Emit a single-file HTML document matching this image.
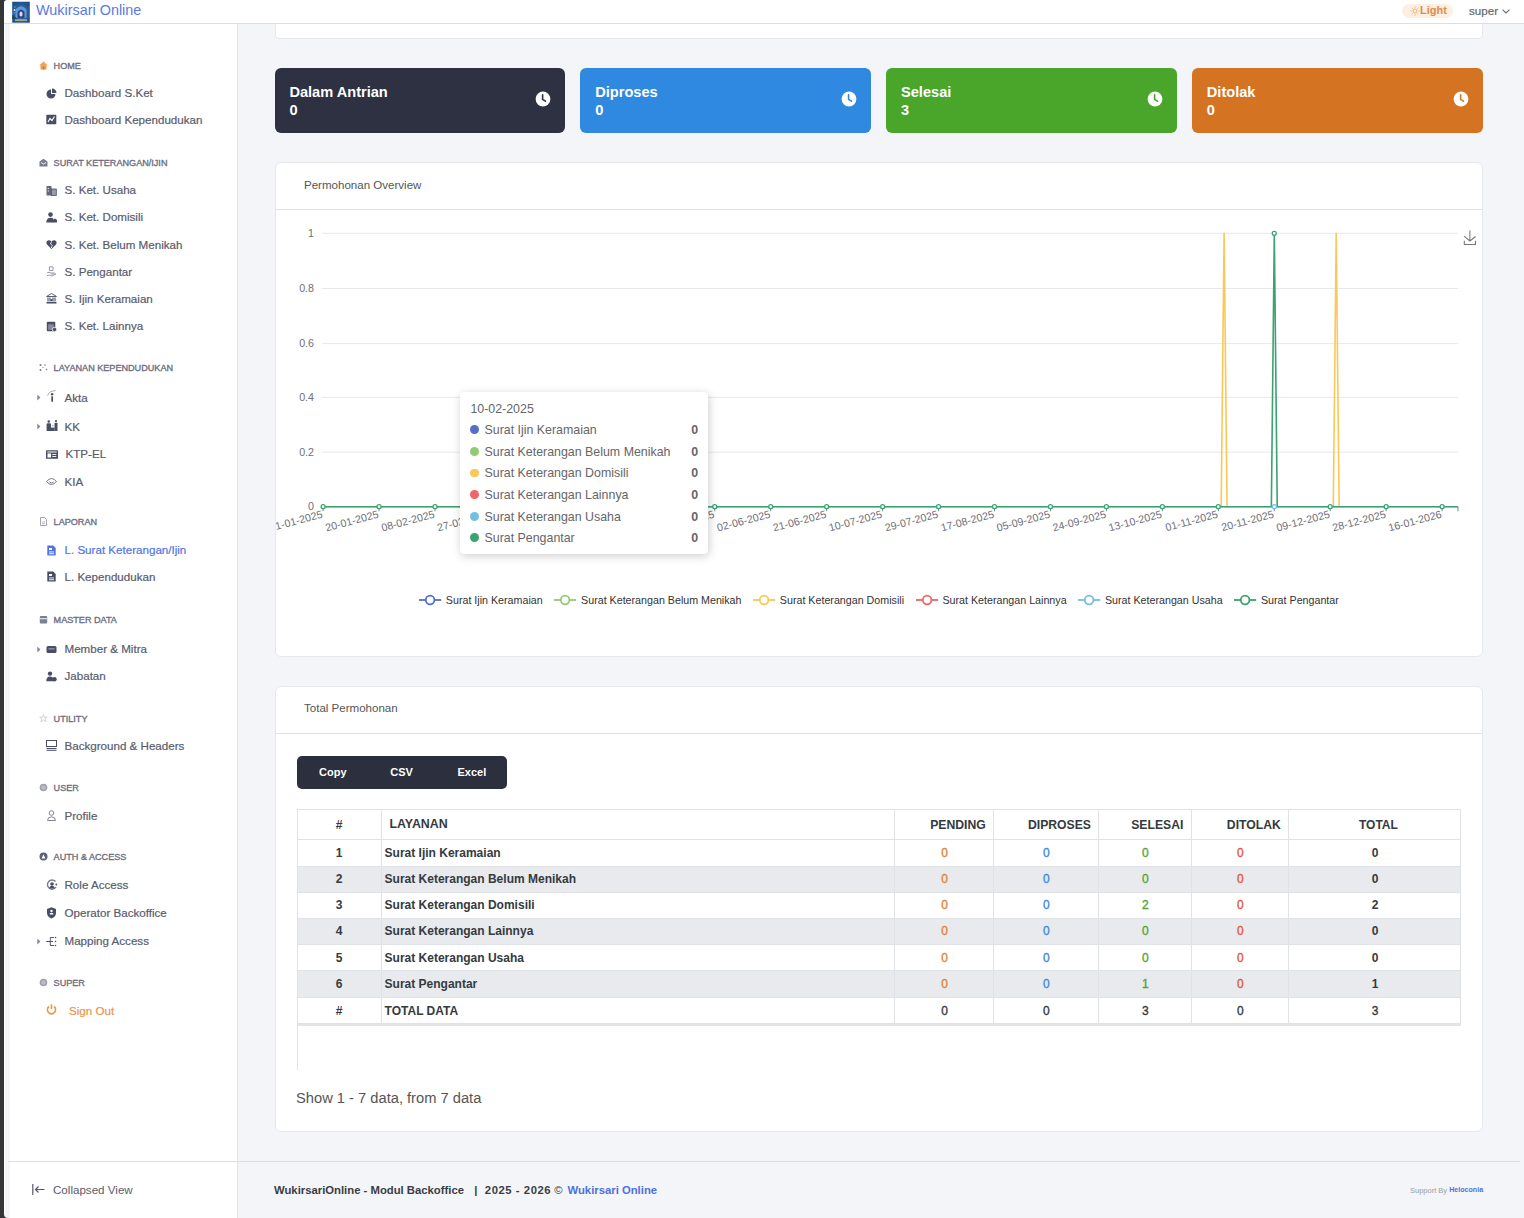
<!DOCTYPE html><html><head><meta charset="utf-8"><title>Wukirsari Online</title><style>
*{box-sizing:border-box;margin:0;padding:0}
html,body{width:1524px;height:1218px;overflow:hidden;background:#f4f5f9;font-family:"Liberation Sans",sans-serif}
body{position:relative}
.t{position:absolute;white-space:nowrap}
.b{position:absolute}
svg{position:absolute;overflow:visible}
</style></head><body>
<div class="b" style="left:0;top:0;width:1524px;height:1218px;background:#f4f5f9"></div>
<div class="b" style="left:4px;top:0;width:234px;height:1218px;background:#fff;border-right:1px solid #e2e4e9"></div>
<div class="b" style="left:5px;top:24px;width:5px;height:1194px;background:#f4f5f8"></div>
<div class="b" style="left:8px;top:1161px;width:230px;height:1px;background:#dcdee3"></div>
<div class="b" style="left:238px;top:1161px;width:1282px;height:1px;background:#dcdee3"></div>
<div class="b" style="left:274.6px;top:-20px;width:1208.4px;height:58.7px;background:#fff;border:1px solid #e6e8ed;border-radius:4px"></div>
<div class="b" style="left:4px;top:0;width:1520px;height:24px;background:#fff;border-bottom:1px solid #dcdee3"></div>
<div class="b" style="left:0;top:0;width:4px;height:1218px;background:#353538"></div>
<svg style="left:4px;top:0" width="3" height="3"><path d="M0 0 H3 A3 3 0 0 0 0 3 Z" fill="#353538"/></svg>
<svg style="left:4px;top:1214px" width="4" height="4"><path d="M0 4 H4 A4 4 0 0 1 0 0 Z" fill="#353538"/></svg>
<svg style="left:11.5px;top:0.5px" width="18" height="22" viewBox="0 0 18 22"><defs><radialGradient id="lg1" cx="0.5" cy="0.55" r="0.6"><stop offset="0" stop-color="#3f78c0"/><stop offset="1" stop-color="#1e4f86"/></radialGradient></defs><rect x="0" y="0" width="18" height="22" fill="#b9d3e8"/><rect x="0.3" y="1" width="17.4" height="20.6" fill="url(#lg1)"/><path d="M3.5 17 L3.5 9 Q9 1.5 14.5 9 L14.5 17 Z" fill="#5b9ad6"/><path d="M5.5 17 L5.5 11 Q9 6 12.5 11 L12.5 17 Z" fill="#2a4585"/><ellipse cx="9" cy="13" rx="1.6" ry="2.6" fill="#f0cfe8"/><path d="M0.3 14 Q3 15 5 18 L0.3 18 Z" fill="#1f4a45"/><rect x="3" y="18.2" width="12" height="1.8" fill="#a9a780"/><circle cx="2.5" cy="9" r="0.9" fill="#cfefff"/><circle cx="3" cy="6" r="0.6" fill="#9fc8e0"/><circle cx="2.2" cy="11.8" r="0.6" fill="#9fc8e0"/></svg>
<div class="t" style="left:36.00px;top:2.61px;font-size:14.4px;line-height:14.4px;color:#5a7ae2;font-weight:normal;">Wukirsari Online</div>
<div class="b" style="left:1402px;top:4px;width:51px;height:14px;border-radius:7px;background:#fdf0e2"></div>
<svg style="left:1409.5px;top:6px" width="10" height="10" viewBox="0 0 10 10"><circle cx="5" cy="5" r="2" fill="none" stroke="#f0a868" stroke-width="0.9"/><g stroke="#f0a868" stroke-width="0.8"><path d="M5 0.3V1.8M5 8.2V9.7M0.3 5H1.8M8.2 5H9.7M1.7 1.7L2.7 2.7M7.3 7.3L8.3 8.3M1.7 8.3L2.7 7.3M7.3 2.7L8.3 1.7"/></g></svg>
<div class="t" style="left:1420.00px;top:5.49px;font-size:11px;line-height:11px;color:#e38b42;font-weight:bold;">Light</div>
<div class="t" style="left:1469.00px;top:4.98px;font-size:11.6px;line-height:11.6px;color:#67686c;font-weight:normal;-webkit-text-stroke:0.2px #67686c">super</div>
<svg style="left:1502px;top:9px" width="8" height="5" viewBox="0 0 8 5"><path d="M0.5 0.6 L4 4 L7.5 0.6" fill="none" stroke="#6b6d72" stroke-width="1.1"/></svg>
<div class="t" style="left:53.60px;top:61.50px;font-size:9.1px;line-height:9.1px;color:#6d6f82;font-weight:normal;-webkit-text-stroke:0.35px #6d6f82">HOME</div>
<svg style="left:39px;top:60.5px" width="9" height="9" viewBox="0 0 9 9"><path d="M4.5 0.5 L8.7 4.3 L7.6 4.3 L7.6 8.5 L1.4 8.5 L1.4 4.3 L0.3 4.3 Z" fill="#f0a35a"/><rect x="3.6" y="5.6" width="1.8" height="2.9" fill="#c8742e"/></svg>
<div class="t" style="left:53.60px;top:158.80px;font-size:9.1px;line-height:9.1px;color:#6d6f82;font-weight:normal;-webkit-text-stroke:0.35px #6d6f82">SURAT KETERANGAN/IJIN</div>
<svg style="left:39px;top:157.8px" width="9" height="9" viewBox="0 0 9 9"><path d="M0.5 3.5 L4.5 0.8 L8.5 3.5 L8.5 8.5 L0.5 8.5 Z" fill="#7a7c90"/><path d="M2 4.5 L4.5 6 L7 4.5" stroke="#fff" stroke-width="0.9" fill="none"/></svg>
<div class="t" style="left:53.60px;top:364.10px;font-size:9.1px;line-height:9.1px;color:#6d6f82;font-weight:normal;-webkit-text-stroke:0.35px #6d6f82">LAYANAN KEPENDUDUKAN</div>
<svg style="left:39px;top:363.1px" width="9" height="9" viewBox="0 0 9 9"><circle cx="1.5" cy="2" r="1" fill="#7a7c90"/><circle cx="6" cy="2" r="0.8" fill="#7a7c90"/><circle cx="1.5" cy="7" r="1" fill="#7a7c90"/><circle cx="7.5" cy="6.5" r="0.8" fill="#7a7c90"/><circle cx="4" cy="4.5" r="0.6" fill="#7a7c90"/></svg>
<div class="t" style="left:53.60px;top:518.40px;font-size:9.1px;line-height:9.1px;color:#6d6f82;font-weight:normal;-webkit-text-stroke:0.35px #6d6f82">LAPORAN</div>
<svg style="left:39px;top:517.4px" width="9" height="9" viewBox="0 0 9 9"><path d="M1.5 0.5 H5.5 L7.5 2.5 V8.5 H1.5 Z" fill="none" stroke="#9a9cab" stroke-width="0.9"/><path d="M3 5 H6 M3 6.7 H6" stroke="#9a9cab" stroke-width="0.7"/></svg>
<div class="t" style="left:53.60px;top:615.70px;font-size:9.1px;line-height:9.1px;color:#6d6f82;font-weight:normal;-webkit-text-stroke:0.35px #6d6f82">MASTER DATA</div>
<svg style="left:39px;top:614.7px" width="9" height="9" viewBox="0 0 9 9"><rect x="0.8" y="1" width="7.4" height="7.5" rx="1" fill="#7d7f93"/><rect x="0.8" y="3.3" width="7.4" height="0.9" fill="#fff"/></svg>
<div class="t" style="left:53.60px;top:714.80px;font-size:9.1px;line-height:9.1px;color:#6d6f82;font-weight:normal;-webkit-text-stroke:0.35px #6d6f82">UTILITY</div>
<svg style="left:39px;top:713.8px" width="9" height="9" viewBox="0 0 9 9"><path d="M4.5 0.5 L5.4 3.2 L8.3 3 L6 4.8 L7.2 7.8 L4.5 6 L1.8 7.8 L3 4.8 L0.7 3 L3.6 3.2 Z" fill="none" stroke="#c8cad3" stroke-width="0.8"/></svg>
<div class="t" style="left:53.60px;top:784.10px;font-size:9.1px;line-height:9.1px;color:#6d6f82;font-weight:normal;-webkit-text-stroke:0.35px #6d6f82">USER</div>
<svg style="left:39px;top:783.1px" width="9" height="9" viewBox="0 0 9 9"><circle cx="4.5" cy="4.5" r="3.8" fill="#9ea0ae"/><circle cx="4.5" cy="4.5" r="2.2" fill="#b9bbc6"/></svg>
<div class="t" style="left:53.60px;top:853.00px;font-size:9.1px;line-height:9.1px;color:#6d6f82;font-weight:normal;-webkit-text-stroke:0.35px #6d6f82">AUTH &amp; ACCESS</div>
<svg style="left:39px;top:852.0px" width="9" height="9" viewBox="0 0 9 9"><circle cx="4.5" cy="4.5" r="4" fill="#5d6076"/><path d="M2.6 6.5 L4.5 2.2 L6.4 6.5 Z" fill="#fff"/></svg>
<div class="t" style="left:53.60px;top:978.90px;font-size:9.1px;line-height:9.1px;color:#6d6f82;font-weight:normal;-webkit-text-stroke:0.35px #6d6f82">SUPER</div>
<svg style="left:39px;top:977.9px" width="9" height="9" viewBox="0 0 9 9"><circle cx="4.5" cy="4.5" r="3.8" fill="#9ea0ae"/><circle cx="4.5" cy="4.5" r="2.2" fill="#b9bbc6"/></svg>
<div class="t" style="left:64.50px;top:87.18px;font-size:11.6px;line-height:11.6px;color:#595b6d;font-weight:normal;-webkit-text-stroke:0.2px #595b6d">Dashboard S.Ket</div>
<svg style="left:46px;top:87.5px" width="11" height="11" viewBox="0 0 11 11"><path d="M5 1.5 A4.5 4.5 0 1 0 9.5 6 L5 6 Z" fill="#4a4d66"/><path d="M6 0.5 A4.5 4.5 0 0 1 10.5 5 L6 5 Z" fill="#4a4d66"/></svg>
<div class="t" style="left:64.50px;top:113.78px;font-size:11.6px;line-height:11.6px;color:#595b6d;font-weight:normal;-webkit-text-stroke:0.2px #595b6d">Dashboard Kependudukan</div>
<svg style="left:46px;top:114.1px" width="11" height="11" viewBox="0 0 11 11"><rect x="0.3" y="0.8" width="10" height="9.4" rx="0.8" fill="#4a4d66"/><path d="M2 8 L4 4.5 L6 6.5 L8.5 2.5" stroke="#fff" stroke-width="1.1" fill="none"/></svg>
<div class="t" style="left:64.50px;top:184.38px;font-size:11.6px;line-height:11.6px;color:#595b6d;font-weight:normal;-webkit-text-stroke:0.2px #595b6d">S. Ket. Usaha</div>
<svg style="left:46px;top:184.7px" width="11" height="11" viewBox="0 0 11 11"><rect x="0.5" y="1" width="5" height="9.5" fill="#4a4d66" opacity="0.85"/><rect x="5.5" y="4" width="4.8" height="6.5" fill="#9a9cab" stroke="#4a4d66" stroke-width="0.8"/><rect x="1.8" y="3" width="1" height="1" fill="#fff"/><rect x="1.8" y="5.5" width="1" height="1" fill="#fff"/></svg>
<div class="t" style="left:64.50px;top:211.48px;font-size:11.6px;line-height:11.6px;color:#595b6d;font-weight:normal;-webkit-text-stroke:0.2px #595b6d">S. Ket. Domisili</div>
<svg style="left:46px;top:211.8px" width="11" height="11" viewBox="0 0 11 11"><circle cx="4.5" cy="2.6" r="2.3" fill="#4a4d66"/><path d="M0.2 10.5 Q0.5 5.8 4.5 5.8 Q7 5.8 7.5 7 L7.5 10.5 Z" fill="#4a4d66"/><path d="M7 10.5 L7 8 L9 6.5 L11 8 L11 10.5 Z" fill="#4a4d66"/></svg>
<div class="t" style="left:64.50px;top:238.58px;font-size:11.6px;line-height:11.6px;color:#595b6d;font-weight:normal;-webkit-text-stroke:0.2px #595b6d">S. Ket. Belum Menikah</div>
<svg style="left:46px;top:238.9px" width="11" height="11" viewBox="0 0 11 11"><path d="M5.5 10 L1 5.5 Q-0.5 3.5 1 2 Q3 0.3 5.5 2.5 Q8 0.3 10 2 Q11.5 3.5 10 5.5 Z" fill="#4a4d66"/><path d="M5.5 2.5 L4.5 5 L6.3 6.3 L5.3 9" stroke="#fff" stroke-width="0.8" fill="none"/></svg>
<div class="t" style="left:64.50px;top:265.68px;font-size:11.6px;line-height:11.6px;color:#595b6d;font-weight:normal;-webkit-text-stroke:0.2px #595b6d">S. Pengantar</div>
<svg style="left:46px;top:266.0px" width="11" height="11" viewBox="0 0 11 11"><path d="M3.5 0.8 H7 V4.5 H3.5 Z M1 7 Q3 5.5 5 7 L8.5 7 Q9.5 7.5 8.5 8 L5 8 M1 9.5 Q4 8.5 6 10 L10 8" fill="none" stroke="#8f91a2" stroke-width="0.9"/></svg>
<div class="t" style="left:64.50px;top:292.78px;font-size:11.6px;line-height:11.6px;color:#595b6d;font-weight:normal;-webkit-text-stroke:0.2px #595b6d">S. Ijin Keramaian</div>
<svg style="left:46px;top:293.1px" width="11" height="11" viewBox="0 0 11 11"><path d="M0.5 3.5 L5.5 0.5 L10.5 3.5 Z" fill="none" stroke="#4a4d66" stroke-width="0.9"/><path d="M2 4.5 V8.5 M4 4.5 V8.5 M7 4.5 V8.5 M9 4.5 V8.5" stroke="#4a4d66" stroke-width="1.1"/><rect x="0.5" y="9" width="10" height="1.5" fill="#4a4d66"/><circle cx="5.5" cy="7.2" r="1.1" fill="#4a4d66"/></svg>
<div class="t" style="left:64.50px;top:320.28px;font-size:11.6px;line-height:11.6px;color:#595b6d;font-weight:normal;-webkit-text-stroke:0.2px #595b6d">S. Ket. Lainnya</div>
<svg style="left:46px;top:320.6px" width="11" height="11" viewBox="0 0 11 11"><rect x="0.8" y="0.8" width="8.5" height="9.5" rx="1" fill="#4a4d66"/><rect x="2.2" y="3.3" width="5.5" height="5.5" fill="#fff" opacity="0.35"/><circle cx="8.5" cy="8.5" r="2.2" fill="#4a4d66" stroke="#fff" stroke-width="0.8"/></svg>
<div class="t" style="left:64.50px;top:391.78px;font-size:11.6px;line-height:11.6px;color:#595b6d;font-weight:normal;-webkit-text-stroke:0.2px #595b6d">Akta</div>
<svg style="left:47px;top:391.1px" width="12" height="13" viewBox="0 0 12 13"><path d="M0.6 4.6 Q1.8 0 8.5 -0.4" fill="none" stroke="#8f91a0" stroke-width="0.8"/><circle cx="5.1" cy="3.2" r="1.2" fill="#4a4d66"/><rect x="4.3" y="5.2" width="1.7" height="5.6" rx="0.6" fill="#4a4d66"/></svg>
<svg style="left:36.8px;top:394.0px" width="4" height="7" viewBox="0 0 4 7"><path d="M0.3 0.4 L3.4 3.4 L0.3 6.4 Z" fill="#8486a0"/></svg>
<div class="t" style="left:64.50px;top:420.58px;font-size:11.6px;line-height:11.6px;color:#595b6d;font-weight:normal;-webkit-text-stroke:0.2px #595b6d">KK</div>
<svg style="left:46px;top:420.4px" width="12" height="12" viewBox="0 0 12 12"><circle cx="2.8" cy="1.5" r="1.25" fill="#4a4d66"/><path d="M0.6 4.2 Q0.6 3.3 1.6 3.3 H4 Q5 3.3 5 4.2 V11 H0.6 Z" fill="#4a4d66"/><circle cx="10" cy="1.1" r="1.1" fill="#4a4d66"/><path d="M8.5 3.6 Q8.5 2.8 9.3 2.8 H10.7 Q11.5 2.8 11.5 3.6 V11 H8.5 Z" fill="#4a4d66"/><circle cx="6.7" cy="5.6" r="0.85" fill="#b5b7c6"/><rect x="5" y="7.6" width="3.5" height="3.4" fill="#4a4d66"/></svg>
<svg style="left:36.8px;top:422.79999999999995px" width="4" height="7" viewBox="0 0 4 7"><path d="M0.3 0.4 L3.4 3.4 L0.3 6.4 Z" fill="#8486a0"/></svg>
<div class="t" style="left:65.50px;top:448.18px;font-size:11.6px;line-height:11.6px;color:#595b6d;font-weight:normal;-webkit-text-stroke:0.2px #595b6d">KTP-EL</div>
<svg style="left:46px;top:448.5px" width="12" height="11" viewBox="0 0 12 11"><rect x="0" y="1.3" width="12" height="8.5" rx="0.6" fill="#4a4d66"/><rect x="1.3" y="2.5" width="9.4" height="1" fill="#fff"/><rect x="1.5" y="4.5" width="3.6" height="4" fill="#fff"/><rect x="6.3" y="5" width="4" height="0.9" fill="#fff"/><rect x="6.3" y="7" width="4" height="0.9" fill="#fff"/></svg>
<div class="t" style="left:64.50px;top:475.58px;font-size:11.6px;line-height:11.6px;color:#595b6d;font-weight:normal;-webkit-text-stroke:0.2px #595b6d">KIA</div>
<svg style="left:46px;top:475.9px" width="11" height="11" viewBox="0 0 11 11"><path d="M0.5 5.5 Q5.5 -0.5 10.5 5.5 Q5.5 11.5 0.5 5.5 Z" fill="none" stroke="#6a6c80" stroke-width="0.9"/><path d="M3.3 5.8 Q5.5 8.5 7.7 5.8" fill="none" stroke="#6a6c80" stroke-width="0.9"/></svg>
<div class="t" style="left:64.50px;top:544.18px;font-size:11.6px;line-height:11.6px;color:#4f74e8;font-weight:normal;-webkit-text-stroke:0.2px #4f74e8">L. Surat Keterangan/Ijin</div>
<svg style="left:46px;top:544.5px" width="11" height="11" viewBox="0 0 11 11"><path d="M1.3 0.5 H7.3 L9.7 2.9 V10.5 H1.3 Z" fill="#4f74e8"/><rect x="3" y="3" width="3" height="2" fill="#fff"/><rect x="3" y="6.5" width="5" height="0.9" fill="#fff"/><rect x="3" y="8.3" width="5" height="0.9" fill="#fff"/></svg>
<div class="t" style="left:64.50px;top:571.08px;font-size:11.6px;line-height:11.6px;color:#595b6d;font-weight:normal;-webkit-text-stroke:0.2px #595b6d">L. Kependudukan</div>
<svg style="left:46px;top:571.4px" width="11" height="11" viewBox="0 0 11 11"><path d="M1.3 0.5 H7.3 L9.7 2.9 V10.5 H1.3 Z" fill="#4a4d66"/><rect x="3" y="3" width="3" height="2" fill="#fff"/><rect x="3" y="6.5" width="5" height="0.9" fill="#fff"/><rect x="3" y="8.3" width="5" height="0.9" fill="#fff"/></svg>
<div class="t" style="left:64.50px;top:643.38px;font-size:11.6px;line-height:11.6px;color:#595b6d;font-weight:normal;-webkit-text-stroke:0.2px #595b6d">Member &amp; Mitra</div>
<svg style="left:46px;top:643.7px" width="11" height="11" viewBox="0 0 11 11"><rect x="0.5" y="2" width="10" height="7" rx="1.5" fill="#4a4d66"/><rect x="2.5" y="4.5" width="6" height="0.8" fill="#fff" opacity="0.7"/></svg>
<svg style="left:36.8px;top:645.6px" width="4" height="7" viewBox="0 0 4 7"><path d="M0.3 0.4 L3.4 3.4 L0.3 6.4 Z" fill="#8486a0"/></svg>
<div class="t" style="left:64.50px;top:670.38px;font-size:11.6px;line-height:11.6px;color:#595b6d;font-weight:normal;-webkit-text-stroke:0.2px #595b6d">Jabatan</div>
<svg style="left:46px;top:670.7px" width="11" height="11" viewBox="0 0 11 11"><circle cx="4" cy="2.6" r="2.2" fill="#4a4d66"/><path d="M0.3 10.3 Q0.3 5.5 4 5.5 Q7 5.5 7.5 8 L7.5 10.3 Z" fill="#4a4d66"/><circle cx="8.5" cy="8.3" r="2.2" fill="#4a4d66"/></svg>
<div class="t" style="left:64.50px;top:739.68px;font-size:11.6px;line-height:11.6px;color:#595b6d;font-weight:normal;-webkit-text-stroke:0.2px #595b6d">Background &amp; Headers</div>
<svg style="left:46px;top:740.0px" width="11" height="11" viewBox="0 0 11 11"><rect x="0.5" y="0.5" width="10" height="6" fill="none" stroke="#4a4d66" stroke-width="1"/><rect x="0.5" y="8" width="10" height="1" fill="#4a4d66"/><rect x="0.5" y="9.8" width="10" height="1" fill="#4a4d66"/></svg>
<div class="t" style="left:64.50px;top:809.58px;font-size:11.6px;line-height:11.6px;color:#595b6d;font-weight:normal;-webkit-text-stroke:0.2px #595b6d">Profile</div>
<svg style="left:46px;top:809.9px" width="11" height="11" viewBox="0 0 11 11"><circle cx="5.5" cy="3" r="2.3" fill="none" stroke="#77798b" stroke-width="0.9"/><path d="M1.5 10.5 Q1.5 6.8 5.5 6.8 Q9.5 6.8 9.5 10.5 Z" fill="none" stroke="#77798b" stroke-width="0.9"/></svg>
<div class="t" style="left:64.50px;top:878.88px;font-size:11.6px;line-height:11.6px;color:#595b6d;font-weight:normal;-webkit-text-stroke:0.2px #595b6d">Role Access</div>
<svg style="left:46px;top:879.2px" width="12" height="11" viewBox="0 0 12 11"><path d="M9.5 2.5 A4.6 4.6 0 1 0 10 8" fill="none" stroke="#76788b" stroke-width="1.4"/><circle cx="6" cy="5" r="1.8" fill="#4a4d66"/><path d="M3.2 9.5 Q3.5 6.8 6 6.8 Q8.5 6.8 8.8 9.5 Z" fill="#4a4d66"/><circle cx="10.3" cy="5.5" r="0.9" fill="#4a4d66"/></svg>
<div class="t" style="left:64.50px;top:906.58px;font-size:11.6px;line-height:11.6px;color:#595b6d;font-weight:normal;-webkit-text-stroke:0.2px #595b6d">Operator Backoffice</div>
<svg style="left:46px;top:906.9px" width="11" height="12" viewBox="0 0 11 12"><path d="M5.5 0.3 L10 2 L10 6 Q10 9.5 5.5 11.5 Q1 9.5 1 6 L1 2 Z" fill="#4a4d66"/><circle cx="5.5" cy="4" r="1.2" fill="#fff"/><rect x="3.8" y="6" width="3.4" height="1.5" fill="#fff"/></svg>
<div class="t" style="left:64.50px;top:935.48px;font-size:11.6px;line-height:11.6px;color:#595b6d;font-weight:normal;-webkit-text-stroke:0.2px #595b6d">Mapping Access</div>
<svg style="left:46px;top:935.8px" width="11" height="11" viewBox="0 0 11 11"><path d="M0.3 5.5 H4" stroke="#4a4d66" stroke-width="1"/><path d="M4.3 1.5 V9.5 M4.3 1.5 H8 M4.3 5.5 H7 M4.3 9.5 H8" stroke="#4a4d66" stroke-width="0.9" fill="none"/><circle cx="9.5" cy="1.5" r="0.8" fill="#4a4d66"/><circle cx="9.5" cy="5.5" r="0.8" fill="#4a4d66"/><circle cx="9.5" cy="9.5" r="0.8" fill="#4a4d66"/></svg>
<svg style="left:36.8px;top:937.6999999999999px" width="4" height="7" viewBox="0 0 4 7"><path d="M0.3 0.4 L3.4 3.4 L0.3 6.4 Z" fill="#8486a0"/></svg>
<svg style="left:46px;top:1003.9px" width="11" height="11" viewBox="0 0 11 11"><path d="M3 2.5 A4.1 4.1 0 1 0 8 2.5" fill="none" stroke="#e8954a" stroke-width="1.6"/><path d="M5.5 0.3 V5" stroke="#e8954a" stroke-width="1.6"/></svg>
<div class="t" style="left:69.00px;top:1004.58px;font-size:11.6px;line-height:11.6px;color:#e8954a;font-weight:normal;-webkit-text-stroke:0.2px #e8954a">Sign Out</div>
<svg style="left:32px;top:1184px" width="13" height="11" viewBox="0 0 13 11"><path d="M0.8 0 V11" stroke="#555868" stroke-width="1.2"/><path d="M12.5 5.5 H3.5 M6.5 2.5 L3.5 5.5 L6.5 8.5" fill="none" stroke="#555868" stroke-width="1.2"/></svg>
<div class="t" style="left:53.00px;top:1183.98px;font-size:11.6px;line-height:11.6px;color:#595b6d;font-weight:normal;">Collapsed View</div>
<div class="b" style="left:274.6px;top:67.8px;width:290.9px;height:65px;background:#2d3142;border-radius:6px"></div>
<div class="t" style="left:289.40px;top:85.34px;font-size:14.6px;line-height:14.6px;color:#fff;font-weight:bold;">Dalam Antrian</div>
<div class="t" style="left:289.40px;top:102.94px;font-size:14.6px;line-height:14.6px;color:#fff;font-weight:bold;">0</div>
<svg style="left:535.2px;top:91.0px" width="16" height="16" viewBox="0 0 16 16"><circle cx="8" cy="8" r="7.4" fill="#fff"/><path d="M7.6 3.8 V8.4 L10.4 10.2" fill="none" stroke="#2d3142" stroke-width="1.6" stroke-linecap="round"/></svg>
<div class="b" style="left:580.4px;top:67.8px;width:290.9px;height:65px;background:#2f89e0;border-radius:6px"></div>
<div class="t" style="left:595.20px;top:85.34px;font-size:14.6px;line-height:14.6px;color:#fff;font-weight:bold;">Diproses</div>
<div class="t" style="left:595.20px;top:102.94px;font-size:14.6px;line-height:14.6px;color:#fff;font-weight:bold;">0</div>
<svg style="left:841.0px;top:91.0px" width="16" height="16" viewBox="0 0 16 16"><circle cx="8" cy="8" r="7.4" fill="#fff"/><path d="M7.6 3.8 V8.4 L10.4 10.2" fill="none" stroke="#2f89e0" stroke-width="1.6" stroke-linecap="round"/></svg>
<div class="b" style="left:886.2px;top:67.8px;width:290.9px;height:65px;background:#4aa52b;border-radius:6px"></div>
<div class="t" style="left:901.00px;top:85.34px;font-size:14.6px;line-height:14.6px;color:#fff;font-weight:bold;">Selesai</div>
<div class="t" style="left:901.00px;top:102.94px;font-size:14.6px;line-height:14.6px;color:#fff;font-weight:bold;">3</div>
<svg style="left:1146.8000000000002px;top:91.0px" width="16" height="16" viewBox="0 0 16 16"><circle cx="8" cy="8" r="7.4" fill="#fff"/><path d="M7.6 3.8 V8.4 L10.4 10.2" fill="none" stroke="#4aa52b" stroke-width="1.6" stroke-linecap="round"/></svg>
<div class="b" style="left:1192.0px;top:67.8px;width:290.9px;height:65px;background:#d47422;border-radius:6px"></div>
<div class="t" style="left:1206.80px;top:85.34px;font-size:14.6px;line-height:14.6px;color:#fff;font-weight:bold;">Ditolak</div>
<div class="t" style="left:1206.80px;top:102.94px;font-size:14.6px;line-height:14.6px;color:#fff;font-weight:bold;">0</div>
<svg style="left:1452.6px;top:91.0px" width="16" height="16" viewBox="0 0 16 16"><circle cx="8" cy="8" r="7.4" fill="#fff"/><path d="M7.6 3.8 V8.4 L10.4 10.2" fill="none" stroke="#d47422" stroke-width="1.6" stroke-linecap="round"/></svg>
<div class="b" style="left:275px;top:162px;width:1208px;height:495px;background:#fff;border:1px solid #e6e8ed;border-radius:6px"></div>
<div class="b" style="left:275px;top:208.5px;width:1208px;height:1px;background:#dfe1e6"></div>
<div class="t" style="left:304.00px;top:180.12px;font-size:11.55px;line-height:11.55px;color:#555;font-weight:normal;">Permohonan Overview</div>
<div class="b" style="left:275px;top:686px;width:1208px;height:446px;background:#fff;border:1px solid #e6e8ed;border-radius:6px"></div>
<div class="b" style="left:275px;top:733px;width:1208px;height:1px;background:#dfe1e6"></div>
<div class="t" style="left:304.00px;top:702.62px;font-size:11.55px;line-height:11.55px;color:#555;font-weight:normal;">Total Permohonan</div>
<svg style="left:0;top:0" width="1524" height="700" viewBox="0 0 1524 700" font-family="Liberation Sans"><defs><clipPath id="cc"><rect x="276" y="210" width="1206" height="446"/></clipPath></defs><g clip-path="url(#cc)"><line x1="322" y1="233.30" x2="1458.0" y2="233.30" stroke="#e3e5ea" stroke-width="0.9"/><text x="314.0" y="236.80" text-anchor="end" font-size="10.7" fill="#6e7079">1</text><line x1="322" y1="288.50" x2="1458.0" y2="288.50" stroke="#e3e5ea" stroke-width="0.9"/><text x="314.0" y="292.00" text-anchor="end" font-size="10.7" fill="#6e7079">0.8</text><line x1="322" y1="343.60" x2="1458.0" y2="343.60" stroke="#e3e5ea" stroke-width="0.9"/><text x="314.0" y="347.10" text-anchor="end" font-size="10.7" fill="#6e7079">0.6</text><line x1="322" y1="397.40" x2="1458.0" y2="397.40" stroke="#e3e5ea" stroke-width="0.9"/><text x="314.0" y="400.90" text-anchor="end" font-size="10.7" fill="#6e7079">0.4</text><line x1="322" y1="452.20" x2="1458.0" y2="452.20" stroke="#e3e5ea" stroke-width="0.9"/><text x="314.0" y="455.70" text-anchor="end" font-size="10.7" fill="#6e7079">0.2</text><line x1="322" y1="506.70" x2="1458.0" y2="506.70" stroke="#e3e5ea" stroke-width="0.9"/><text x="314.0" y="510.20" text-anchor="end" font-size="10.7" fill="#6e7079">0</text><line x1="322" y1="506.7" x2="1458.0" y2="506.7" stroke="#6e7079" stroke-width="0.9"/><line x1="323.10" y1="506.7" x2="323.10" y2="511.2" stroke="#6e7079" stroke-width="0.9"/><text x="322.30" y="513.50" text-anchor="end" dominant-baseline="central" font-size="10.7" fill="#6e7079" transform="rotate(-15 322.30 513.50)">01-01-2025</text><line x1="379.05" y1="506.7" x2="379.05" y2="511.2" stroke="#6e7079" stroke-width="0.9"/><text x="378.25" y="513.50" text-anchor="end" dominant-baseline="central" font-size="10.7" fill="#6e7079" transform="rotate(-15 378.25 513.50)">20-01-2025</text><line x1="435.00" y1="506.7" x2="435.00" y2="511.2" stroke="#6e7079" stroke-width="0.9"/><text x="434.20" y="513.50" text-anchor="end" dominant-baseline="central" font-size="10.7" fill="#6e7079" transform="rotate(-15 434.20 513.50)">08-02-2025</text><line x1="490.95" y1="506.7" x2="490.95" y2="511.2" stroke="#6e7079" stroke-width="0.9"/><text x="490.15" y="513.50" text-anchor="end" dominant-baseline="central" font-size="10.7" fill="#6e7079" transform="rotate(-15 490.15 513.50)">27-02-2025</text><line x1="546.90" y1="506.7" x2="546.90" y2="511.2" stroke="#6e7079" stroke-width="0.9"/><text x="546.10" y="513.50" text-anchor="end" dominant-baseline="central" font-size="10.7" fill="#6e7079" transform="rotate(-15 546.10 513.50)">18-03-2025</text><line x1="602.85" y1="506.7" x2="602.85" y2="511.2" stroke="#6e7079" stroke-width="0.9"/><text x="602.05" y="513.50" text-anchor="end" dominant-baseline="central" font-size="10.7" fill="#6e7079" transform="rotate(-15 602.05 513.50)">06-04-2025</text><line x1="658.80" y1="506.7" x2="658.80" y2="511.2" stroke="#6e7079" stroke-width="0.9"/><text x="658.00" y="513.50" text-anchor="end" dominant-baseline="central" font-size="10.7" fill="#6e7079" transform="rotate(-15 658.00 513.50)">25-04-2025</text><line x1="714.75" y1="506.7" x2="714.75" y2="511.2" stroke="#6e7079" stroke-width="0.9"/><text x="713.95" y="513.50" text-anchor="end" dominant-baseline="central" font-size="10.7" fill="#6e7079" transform="rotate(-15 713.95 513.50)">14-05-2025</text><line x1="770.70" y1="506.7" x2="770.70" y2="511.2" stroke="#6e7079" stroke-width="0.9"/><text x="769.90" y="513.50" text-anchor="end" dominant-baseline="central" font-size="10.7" fill="#6e7079" transform="rotate(-15 769.90 513.50)">02-06-2025</text><line x1="826.65" y1="506.7" x2="826.65" y2="511.2" stroke="#6e7079" stroke-width="0.9"/><text x="825.85" y="513.50" text-anchor="end" dominant-baseline="central" font-size="10.7" fill="#6e7079" transform="rotate(-15 825.85 513.50)">21-06-2025</text><line x1="882.60" y1="506.7" x2="882.60" y2="511.2" stroke="#6e7079" stroke-width="0.9"/><text x="881.80" y="513.50" text-anchor="end" dominant-baseline="central" font-size="10.7" fill="#6e7079" transform="rotate(-15 881.80 513.50)">10-07-2025</text><line x1="938.55" y1="506.7" x2="938.55" y2="511.2" stroke="#6e7079" stroke-width="0.9"/><text x="937.75" y="513.50" text-anchor="end" dominant-baseline="central" font-size="10.7" fill="#6e7079" transform="rotate(-15 937.75 513.50)">29-07-2025</text><line x1="994.50" y1="506.7" x2="994.50" y2="511.2" stroke="#6e7079" stroke-width="0.9"/><text x="993.70" y="513.50" text-anchor="end" dominant-baseline="central" font-size="10.7" fill="#6e7079" transform="rotate(-15 993.70 513.50)">17-08-2025</text><line x1="1050.45" y1="506.7" x2="1050.45" y2="511.2" stroke="#6e7079" stroke-width="0.9"/><text x="1049.65" y="513.50" text-anchor="end" dominant-baseline="central" font-size="10.7" fill="#6e7079" transform="rotate(-15 1049.65 513.50)">05-09-2025</text><line x1="1106.40" y1="506.7" x2="1106.40" y2="511.2" stroke="#6e7079" stroke-width="0.9"/><text x="1105.60" y="513.50" text-anchor="end" dominant-baseline="central" font-size="10.7" fill="#6e7079" transform="rotate(-15 1105.60 513.50)">24-09-2025</text><line x1="1162.35" y1="506.7" x2="1162.35" y2="511.2" stroke="#6e7079" stroke-width="0.9"/><text x="1161.55" y="513.50" text-anchor="end" dominant-baseline="central" font-size="10.7" fill="#6e7079" transform="rotate(-15 1161.55 513.50)">13-10-2025</text><line x1="1218.30" y1="506.7" x2="1218.30" y2="511.2" stroke="#6e7079" stroke-width="0.9"/><text x="1217.50" y="513.50" text-anchor="end" dominant-baseline="central" font-size="10.7" fill="#6e7079" transform="rotate(-15 1217.50 513.50)">01-11-2025</text><line x1="1274.25" y1="506.7" x2="1274.25" y2="511.2" stroke="#6e7079" stroke-width="0.9"/><text x="1273.45" y="513.50" text-anchor="end" dominant-baseline="central" font-size="10.7" fill="#6e7079" transform="rotate(-15 1273.45 513.50)">20-11-2025</text><line x1="1330.20" y1="506.7" x2="1330.20" y2="511.2" stroke="#6e7079" stroke-width="0.9"/><text x="1329.40" y="513.50" text-anchor="end" dominant-baseline="central" font-size="10.7" fill="#6e7079" transform="rotate(-15 1329.40 513.50)">09-12-2025</text><line x1="1386.15" y1="506.7" x2="1386.15" y2="511.2" stroke="#6e7079" stroke-width="0.9"/><text x="1385.35" y="513.50" text-anchor="end" dominant-baseline="central" font-size="10.7" fill="#6e7079" transform="rotate(-15 1385.35 513.50)">28-12-2025</text><line x1="1442.10" y1="506.7" x2="1442.10" y2="511.2" stroke="#6e7079" stroke-width="0.9"/><text x="1441.30" y="513.50" text-anchor="end" dominant-baseline="central" font-size="10.7" fill="#6e7079" transform="rotate(-15 1441.30 513.50)">16-01-2026</text><line x1="1458.0" y1="506.7" x2="1458.0" y2="511.2" stroke="#6e7079" stroke-width="0.9"/><polyline points="1221.16,506.7 1224.10,233.3 1227.04,506.7" fill="none" stroke="#fac858" stroke-width="1.6" stroke-linejoin="round"/><polyline points="1333.26,506.7 1336.20,233.3 1339.14,506.7" fill="none" stroke="#fac858" stroke-width="1.6" stroke-linejoin="round"/><polyline points="322,506.7 1271.36,506.7 1274.30,233.3 1277.24,506.7 1458.0,506.7" fill="none" stroke="#3ba272" stroke-width="1.6" stroke-linejoin="round"/><circle cx="323.10" cy="506.70" r="2.0" fill="#fff" stroke="#3ba272" stroke-width="1.25"/><circle cx="379.05" cy="506.70" r="2.0" fill="#fff" stroke="#3ba272" stroke-width="1.25"/><circle cx="435.00" cy="506.70" r="2.0" fill="#fff" stroke="#3ba272" stroke-width="1.25"/><circle cx="490.95" cy="506.70" r="2.0" fill="#fff" stroke="#3ba272" stroke-width="1.25"/><circle cx="546.90" cy="506.70" r="2.0" fill="#fff" stroke="#3ba272" stroke-width="1.25"/><circle cx="602.85" cy="506.70" r="2.0" fill="#fff" stroke="#3ba272" stroke-width="1.25"/><circle cx="658.80" cy="506.70" r="2.0" fill="#fff" stroke="#3ba272" stroke-width="1.25"/><circle cx="714.75" cy="506.70" r="2.0" fill="#fff" stroke="#3ba272" stroke-width="1.25"/><circle cx="770.70" cy="506.70" r="2.0" fill="#fff" stroke="#3ba272" stroke-width="1.25"/><circle cx="826.65" cy="506.70" r="2.0" fill="#fff" stroke="#3ba272" stroke-width="1.25"/><circle cx="882.60" cy="506.70" r="2.0" fill="#fff" stroke="#3ba272" stroke-width="1.25"/><circle cx="938.55" cy="506.70" r="2.0" fill="#fff" stroke="#3ba272" stroke-width="1.25"/><circle cx="994.50" cy="506.70" r="2.0" fill="#fff" stroke="#3ba272" stroke-width="1.25"/><circle cx="1050.45" cy="506.70" r="2.0" fill="#fff" stroke="#3ba272" stroke-width="1.25"/><circle cx="1106.40" cy="506.70" r="2.0" fill="#fff" stroke="#3ba272" stroke-width="1.25"/><circle cx="1162.35" cy="506.70" r="2.0" fill="#fff" stroke="#3ba272" stroke-width="1.25"/><circle cx="1218.30" cy="506.70" r="2.0" fill="#fff" stroke="#3ba272" stroke-width="1.25"/><circle cx="1274.25" cy="233.30" r="2.0" fill="#fff" stroke="#3ba272" stroke-width="1.25"/><circle cx="1330.20" cy="506.70" r="2.0" fill="#fff" stroke="#3ba272" stroke-width="1.25"/><circle cx="1386.15" cy="506.70" r="2.0" fill="#fff" stroke="#3ba272" stroke-width="1.25"/><circle cx="1442.10" cy="506.70" r="2.0" fill="#fff" stroke="#3ba272" stroke-width="1.25"/><circle cx="1274.30" cy="506.7" r="2.0" fill="#fff" stroke="#73c0de" stroke-width="1.25"/><g fill="none" stroke="#777" stroke-width="1.05"><path d="M1469.9 230.5 V241 M1464.1 236.2 L1469.9 241 L1475.6 236.5"/><path d="M1464.3 240.8 V244.4 H1475.5 V240.8"/></g></g></svg>
<div class="b" style="left:275px;top:593px;width:1208px;height:14px;display:flex;justify-content:center;align-items:center"><div style="display:flex;align-items:center;margin:0 5.85px"><svg style="position:relative" width="22.2" height="12" viewBox="0 0 22.2 12"><line x1="0" y1="6" x2="22.2" y2="6" stroke="#5470c6" stroke-width="1.8"/><circle cx="11.1" cy="6" r="4.3" fill="#fff" stroke="#5470c6" stroke-width="1.8"/></svg><span style="margin-left:4.5px;font-size:10.7px;color:#333;white-space:nowrap">Surat Ijin Keramaian</span></div><div style="display:flex;align-items:center;margin:0 5.85px"><svg style="position:relative" width="22.2" height="12" viewBox="0 0 22.2 12"><line x1="0" y1="6" x2="22.2" y2="6" stroke="#91cc75" stroke-width="1.8"/><circle cx="11.1" cy="6" r="4.3" fill="#fff" stroke="#91cc75" stroke-width="1.8"/></svg><span style="margin-left:4.5px;font-size:10.7px;color:#333;white-space:nowrap">Surat Keterangan Belum Menikah</span></div><div style="display:flex;align-items:center;margin:0 5.85px"><svg style="position:relative" width="22.2" height="12" viewBox="0 0 22.2 12"><line x1="0" y1="6" x2="22.2" y2="6" stroke="#fac858" stroke-width="1.8"/><circle cx="11.1" cy="6" r="4.3" fill="#fff" stroke="#fac858" stroke-width="1.8"/></svg><span style="margin-left:4.5px;font-size:10.7px;color:#333;white-space:nowrap">Surat Keterangan Domisili</span></div><div style="display:flex;align-items:center;margin:0 5.85px"><svg style="position:relative" width="22.2" height="12" viewBox="0 0 22.2 12"><line x1="0" y1="6" x2="22.2" y2="6" stroke="#ee6666" stroke-width="1.8"/><circle cx="11.1" cy="6" r="4.3" fill="#fff" stroke="#ee6666" stroke-width="1.8"/></svg><span style="margin-left:4.5px;font-size:10.7px;color:#333;white-space:nowrap">Surat Keterangan Lainnya</span></div><div style="display:flex;align-items:center;margin:0 5.85px"><svg style="position:relative" width="22.2" height="12" viewBox="0 0 22.2 12"><line x1="0" y1="6" x2="22.2" y2="6" stroke="#73c0de" stroke-width="1.8"/><circle cx="11.1" cy="6" r="4.3" fill="#fff" stroke="#73c0de" stroke-width="1.8"/></svg><span style="margin-left:4.5px;font-size:10.7px;color:#333;white-space:nowrap">Surat Keterangan Usaha</span></div><div style="display:flex;align-items:center;margin:0 5.85px"><svg style="position:relative" width="22.2" height="12" viewBox="0 0 22.2 12"><line x1="0" y1="6" x2="22.2" y2="6" stroke="#3ba272" stroke-width="1.8"/><circle cx="11.1" cy="6" r="4.3" fill="#fff" stroke="#3ba272" stroke-width="1.8"/></svg><span style="margin-left:4.5px;font-size:10.7px;color:#333;white-space:nowrap">Surat Pengantar</span></div></div>
<div class="b" style="left:460px;top:392.4px;width:248px;height:161.2px;background:#fff;border-radius:4px;box-shadow:1px 2px 10px rgba(0,0,0,0.2)"></div>
<div class="t" style="left:470.40px;top:402.70px;font-size:12.4px;line-height:12.4px;color:#666;font-weight:normal;">10-02-2025</div>
<div class="b" style="left:469.85px;top:425.15px;width:8.9px;height:8.9px;border-radius:50%;background:#5470c6"></div>
<div class="t" style="left:484.50px;top:424.00px;font-size:12.4px;line-height:12.4px;color:#666;font-weight:normal;">Surat Ijin Keramaian</div>
<div class="t" style="left:648.20px;top:424.00px;font-size:12.4px;line-height:12.4px;color:#666;font-weight:bold;width:50px;text-align:right;">0</div>
<div class="b" style="left:469.85px;top:446.95px;width:8.9px;height:8.9px;border-radius:50%;background:#91cc75"></div>
<div class="t" style="left:484.50px;top:445.80px;font-size:12.4px;line-height:12.4px;color:#666;font-weight:normal;">Surat Keterangan Belum Menikah</div>
<div class="t" style="left:648.20px;top:445.80px;font-size:12.4px;line-height:12.4px;color:#666;font-weight:bold;width:50px;text-align:right;">0</div>
<div class="b" style="left:469.85px;top:468.55px;width:8.9px;height:8.9px;border-radius:50%;background:#fac858"></div>
<div class="t" style="left:484.50px;top:467.40px;font-size:12.4px;line-height:12.4px;color:#666;font-weight:normal;">Surat Keterangan Domisili</div>
<div class="t" style="left:648.20px;top:467.40px;font-size:12.4px;line-height:12.4px;color:#666;font-weight:bold;width:50px;text-align:right;">0</div>
<div class="b" style="left:469.85px;top:490.15px;width:8.9px;height:8.9px;border-radius:50%;background:#ee6666"></div>
<div class="t" style="left:484.50px;top:489.00px;font-size:12.4px;line-height:12.4px;color:#666;font-weight:normal;">Surat Keterangan Lainnya</div>
<div class="t" style="left:648.20px;top:489.00px;font-size:12.4px;line-height:12.4px;color:#666;font-weight:bold;width:50px;text-align:right;">0</div>
<div class="b" style="left:469.85px;top:512.05px;width:8.9px;height:8.9px;border-radius:50%;background:#73c0de"></div>
<div class="t" style="left:484.50px;top:510.90px;font-size:12.4px;line-height:12.4px;color:#666;font-weight:normal;">Surat Keterangan Usaha</div>
<div class="t" style="left:648.20px;top:510.90px;font-size:12.4px;line-height:12.4px;color:#666;font-weight:bold;width:50px;text-align:right;">0</div>
<div class="b" style="left:469.85px;top:533.25px;width:8.9px;height:8.9px;border-radius:50%;background:#3ba272"></div>
<div class="t" style="left:484.50px;top:532.10px;font-size:12.4px;line-height:12.4px;color:#666;font-weight:normal;">Surat Pengantar</div>
<div class="t" style="left:648.20px;top:532.10px;font-size:12.4px;line-height:12.4px;color:#666;font-weight:bold;width:50px;text-align:right;">0</div>
<div class="b" style="left:297px;top:756px;width:210.2px;height:32.6px;background:#2b2f3e;border-radius:5px"></div>
<div class="t" style="left:319.00px;top:766.59px;font-size:11px;line-height:11px;color:#fff;font-weight:bold;">Copy</div>
<div class="t" style="left:390.20px;top:766.59px;font-size:11px;line-height:11px;color:#fff;font-weight:bold;">CSV</div>
<div class="t" style="left:457.50px;top:766.59px;font-size:11px;line-height:11px;color:#fff;font-weight:bold;">Excel</div>
<div class="b" style="left:297.6px;top:866.0px;width:1163.1px;height:26.5px;background:#e9eaee"></div>
<div class="b" style="left:297.6px;top:918.1px;width:1163.1px;height:26.5px;background:#e9eaee"></div>
<div class="b" style="left:297.6px;top:970.8px;width:1163.1px;height:27.0px;background:#e9eaee"></div>
<div class="b" style="left:297.6px;top:808.8px;width:1163.1px;height:1px;background:#dfe2e6"></div>
<div class="b" style="left:297.6px;top:838.7px;width:1163.1px;height:1px;background:#dfe2e6"></div>
<div class="b" style="left:297.6px;top:865.5px;width:1163.1px;height:1px;background:#dfe2e6"></div>
<div class="b" style="left:297.6px;top:892.0px;width:1163.1px;height:1px;background:#dfe2e6"></div>
<div class="b" style="left:297.6px;top:917.6px;width:1163.1px;height:1px;background:#dfe2e6"></div>
<div class="b" style="left:297.6px;top:944.1px;width:1163.1px;height:1px;background:#dfe2e6"></div>
<div class="b" style="left:297.6px;top:970.3px;width:1163.1px;height:1px;background:#dfe2e6"></div>
<div class="b" style="left:297.6px;top:997.3px;width:1163.1px;height:1px;background:#dfe2e6"></div>
<div class="b" style="left:297.6px;top:1023.3px;width:1163.1px;height:1px;background:#dfe2e6"></div>
<div class="b" style="left:297.6px;top:1023.8px;width:1163.1px;height:2.2px;background:#e2e4e8"></div>
<div class="b" style="left:297.1px;top:809.3px;width:1px;height:214.5px;background:#dfe2e6"></div>
<div class="b" style="left:381.1px;top:809.3px;width:1px;height:214.5px;background:#dfe2e6"></div>
<div class="b" style="left:894.3px;top:809.3px;width:1px;height:214.5px;background:#dfe2e6"></div>
<div class="b" style="left:993.1px;top:809.3px;width:1px;height:214.5px;background:#dfe2e6"></div>
<div class="b" style="left:1098.0px;top:809.3px;width:1px;height:214.5px;background:#dfe2e6"></div>
<div class="b" style="left:1190.8px;top:809.3px;width:1px;height:214.5px;background:#dfe2e6"></div>
<div class="b" style="left:1288.0px;top:809.3px;width:1px;height:214.5px;background:#dfe2e6"></div>
<div class="b" style="left:1460.2px;top:809.3px;width:1px;height:214.5px;background:#dfe2e6"></div>
<div class="b" style="left:297.1px;top:1024px;width:1px;height:46px;background:#dfe2e6"></div>
<div class="t" style="left:289.20px;top:818.74px;font-size:12px;line-height:12px;color:#343a40;font-weight:bold;width:100px;text-align:center;">#</div>
<div class="t" style="left:389.40px;top:818.40px;font-size:12.4px;line-height:12.4px;color:#343a40;font-weight:bold;">LAYANAN</div>
<div class="t" style="left:835.70px;top:818.57px;font-size:12.2px;line-height:12.2px;color:#343a40;font-weight:bold;width:150px;text-align:right;">PENDING</div>
<div class="t" style="left:941.00px;top:818.57px;font-size:12.2px;line-height:12.2px;color:#343a40;font-weight:bold;width:150px;text-align:right;">DIPROSES</div>
<div class="t" style="left:1033.40px;top:818.57px;font-size:12.2px;line-height:12.2px;color:#343a40;font-weight:bold;width:150px;text-align:right;">SELESAI</div>
<div class="t" style="left:1130.80px;top:818.57px;font-size:12.2px;line-height:12.2px;color:#343a40;font-weight:bold;width:150px;text-align:right;">DITOLAK</div>
<div class="t" style="left:1328.40px;top:818.74px;font-size:12px;line-height:12px;color:#343a40;font-weight:bold;width:100px;text-align:center;">TOTAL</div>
<div class="t" style="left:289.20px;top:846.74px;font-size:12px;line-height:12px;color:#343a40;font-weight:bold;width:100px;text-align:center;">1</div>
<div class="t" style="left:384.60px;top:846.74px;font-size:12px;line-height:12px;color:#343a40;font-weight:bold;">Surat Ijin Keramaian</div>
<div class="t" style="left:894.60px;top:846.74px;font-size:12px;line-height:12px;color:#dc843a;font-weight:normal;width:100px;text-align:center;-webkit-text-stroke:0.35px #dc843a">0</div>
<div class="t" style="left:996.45px;top:846.74px;font-size:12px;line-height:12px;color:#3d8ae0;font-weight:normal;width:100px;text-align:center;-webkit-text-stroke:0.35px #3d8ae0">0</div>
<div class="t" style="left:1095.30px;top:846.74px;font-size:12px;line-height:12px;color:#52a536;font-weight:normal;width:100px;text-align:center;-webkit-text-stroke:0.35px #52a536">0</div>
<div class="t" style="left:1190.30px;top:846.74px;font-size:12px;line-height:12px;color:#e0573c;font-weight:normal;width:100px;text-align:center;-webkit-text-stroke:0.35px #e0573c">0</div>
<div class="t" style="left:1325.10px;top:846.74px;font-size:12px;line-height:12px;color:#343a40;font-weight:bold;width:100px;text-align:center;">0</div>
<div class="t" style="left:289.20px;top:873.39px;font-size:12px;line-height:12px;color:#343a40;font-weight:bold;width:100px;text-align:center;">2</div>
<div class="t" style="left:384.60px;top:873.39px;font-size:12px;line-height:12px;color:#343a40;font-weight:bold;">Surat Keterangan Belum Menikah</div>
<div class="t" style="left:894.60px;top:873.39px;font-size:12px;line-height:12px;color:#dc843a;font-weight:normal;width:100px;text-align:center;-webkit-text-stroke:0.35px #dc843a">0</div>
<div class="t" style="left:996.45px;top:873.39px;font-size:12px;line-height:12px;color:#3d8ae0;font-weight:normal;width:100px;text-align:center;-webkit-text-stroke:0.35px #3d8ae0">0</div>
<div class="t" style="left:1095.30px;top:873.39px;font-size:12px;line-height:12px;color:#52a536;font-weight:normal;width:100px;text-align:center;-webkit-text-stroke:0.35px #52a536">0</div>
<div class="t" style="left:1190.30px;top:873.39px;font-size:12px;line-height:12px;color:#e0573c;font-weight:normal;width:100px;text-align:center;-webkit-text-stroke:0.35px #e0573c">0</div>
<div class="t" style="left:1325.10px;top:873.39px;font-size:12px;line-height:12px;color:#343a40;font-weight:bold;width:100px;text-align:center;">0</div>
<div class="t" style="left:289.20px;top:899.44px;font-size:12px;line-height:12px;color:#343a40;font-weight:bold;width:100px;text-align:center;">3</div>
<div class="t" style="left:384.60px;top:899.44px;font-size:12px;line-height:12px;color:#343a40;font-weight:bold;">Surat Keterangan Domisili</div>
<div class="t" style="left:894.60px;top:899.44px;font-size:12px;line-height:12px;color:#dc843a;font-weight:normal;width:100px;text-align:center;-webkit-text-stroke:0.35px #dc843a">0</div>
<div class="t" style="left:996.45px;top:899.44px;font-size:12px;line-height:12px;color:#3d8ae0;font-weight:normal;width:100px;text-align:center;-webkit-text-stroke:0.35px #3d8ae0">0</div>
<div class="t" style="left:1095.30px;top:899.44px;font-size:12px;line-height:12px;color:#52a536;font-weight:normal;width:100px;text-align:center;-webkit-text-stroke:0.35px #52a536">2</div>
<div class="t" style="left:1190.30px;top:899.44px;font-size:12px;line-height:12px;color:#e0573c;font-weight:normal;width:100px;text-align:center;-webkit-text-stroke:0.35px #e0573c">0</div>
<div class="t" style="left:1325.10px;top:899.44px;font-size:12px;line-height:12px;color:#343a40;font-weight:bold;width:100px;text-align:center;">2</div>
<div class="t" style="left:289.20px;top:925.49px;font-size:12px;line-height:12px;color:#343a40;font-weight:bold;width:100px;text-align:center;">4</div>
<div class="t" style="left:384.60px;top:925.49px;font-size:12px;line-height:12px;color:#343a40;font-weight:bold;">Surat Keterangan Lainnya</div>
<div class="t" style="left:894.60px;top:925.49px;font-size:12px;line-height:12px;color:#dc843a;font-weight:normal;width:100px;text-align:center;-webkit-text-stroke:0.35px #dc843a">0</div>
<div class="t" style="left:996.45px;top:925.49px;font-size:12px;line-height:12px;color:#3d8ae0;font-weight:normal;width:100px;text-align:center;-webkit-text-stroke:0.35px #3d8ae0">0</div>
<div class="t" style="left:1095.30px;top:925.49px;font-size:12px;line-height:12px;color:#52a536;font-weight:normal;width:100px;text-align:center;-webkit-text-stroke:0.35px #52a536">0</div>
<div class="t" style="left:1190.30px;top:925.49px;font-size:12px;line-height:12px;color:#e0573c;font-weight:normal;width:100px;text-align:center;-webkit-text-stroke:0.35px #e0573c">0</div>
<div class="t" style="left:1325.10px;top:925.49px;font-size:12px;line-height:12px;color:#343a40;font-weight:bold;width:100px;text-align:center;">0</div>
<div class="t" style="left:289.20px;top:951.84px;font-size:12px;line-height:12px;color:#343a40;font-weight:bold;width:100px;text-align:center;">5</div>
<div class="t" style="left:384.60px;top:951.84px;font-size:12px;line-height:12px;color:#343a40;font-weight:bold;">Surat Keterangan Usaha</div>
<div class="t" style="left:894.60px;top:951.84px;font-size:12px;line-height:12px;color:#dc843a;font-weight:normal;width:100px;text-align:center;-webkit-text-stroke:0.35px #dc843a">0</div>
<div class="t" style="left:996.45px;top:951.84px;font-size:12px;line-height:12px;color:#3d8ae0;font-weight:normal;width:100px;text-align:center;-webkit-text-stroke:0.35px #3d8ae0">0</div>
<div class="t" style="left:1095.30px;top:951.84px;font-size:12px;line-height:12px;color:#52a536;font-weight:normal;width:100px;text-align:center;-webkit-text-stroke:0.35px #52a536">0</div>
<div class="t" style="left:1190.30px;top:951.84px;font-size:12px;line-height:12px;color:#e0573c;font-weight:normal;width:100px;text-align:center;-webkit-text-stroke:0.35px #e0573c">0</div>
<div class="t" style="left:1325.10px;top:951.84px;font-size:12px;line-height:12px;color:#343a40;font-weight:bold;width:100px;text-align:center;">0</div>
<div class="t" style="left:289.20px;top:978.44px;font-size:12px;line-height:12px;color:#343a40;font-weight:bold;width:100px;text-align:center;">6</div>
<div class="t" style="left:384.60px;top:978.44px;font-size:12px;line-height:12px;color:#343a40;font-weight:bold;">Surat Pengantar</div>
<div class="t" style="left:894.60px;top:978.44px;font-size:12px;line-height:12px;color:#dc843a;font-weight:normal;width:100px;text-align:center;-webkit-text-stroke:0.35px #dc843a">0</div>
<div class="t" style="left:996.45px;top:978.44px;font-size:12px;line-height:12px;color:#3d8ae0;font-weight:normal;width:100px;text-align:center;-webkit-text-stroke:0.35px #3d8ae0">0</div>
<div class="t" style="left:1095.30px;top:978.44px;font-size:12px;line-height:12px;color:#52a536;font-weight:normal;width:100px;text-align:center;-webkit-text-stroke:0.35px #52a536">1</div>
<div class="t" style="left:1190.30px;top:978.44px;font-size:12px;line-height:12px;color:#e0573c;font-weight:normal;width:100px;text-align:center;-webkit-text-stroke:0.35px #e0573c">0</div>
<div class="t" style="left:1325.10px;top:978.44px;font-size:12px;line-height:12px;color:#343a40;font-weight:bold;width:100px;text-align:center;">1</div>
<div class="t" style="left:289.20px;top:1004.94px;font-size:12px;line-height:12px;color:#343a40;font-weight:bold;width:100px;text-align:center;">#</div>
<div class="t" style="left:384.60px;top:1004.94px;font-size:12px;line-height:12px;color:#343a40;font-weight:bold;">TOTAL DATA</div>
<div class="t" style="left:894.60px;top:1004.94px;font-size:12px;line-height:12px;color:#343a40;font-weight:normal;width:100px;text-align:center;-webkit-text-stroke:0.35px #343a40">0</div>
<div class="t" style="left:996.45px;top:1004.94px;font-size:12px;line-height:12px;color:#343a40;font-weight:normal;width:100px;text-align:center;-webkit-text-stroke:0.35px #343a40">0</div>
<div class="t" style="left:1095.30px;top:1004.94px;font-size:12px;line-height:12px;color:#343a40;font-weight:normal;width:100px;text-align:center;-webkit-text-stroke:0.35px #343a40">3</div>
<div class="t" style="left:1190.30px;top:1004.94px;font-size:12px;line-height:12px;color:#343a40;font-weight:normal;width:100px;text-align:center;-webkit-text-stroke:0.35px #343a40">0</div>
<div class="t" style="left:1325.10px;top:1004.94px;font-size:12px;line-height:12px;color:#343a40;font-weight:normal;width:100px;text-align:center;-webkit-text-stroke:0.35px #343a40">3</div>
<div class="t" style="left:296.00px;top:1090.66px;font-size:14.7px;line-height:14.7px;color:#555;font-weight:normal;">Show 1 - 7 data, from 7 data</div>
<div class="t" style="left:274.00px;top:1185.03px;font-size:11.3px;line-height:11.3px;color:#3b3d44;font-weight:bold;">WukirsariOnline - Modul Backoffice</div>
<div class="t" style="left:474.30px;top:1185.03px;font-size:11.3px;line-height:11.3px;color:#3b3d44;font-weight:bold;">|</div>
<div class="t" style="left:484.80px;top:1185.03px;font-size:11.3px;line-height:11.3px;color:#3b3d44;font-weight:bold;letter-spacing:0.55px">2025 - 2026</div>
<div class="t" style="left:554.20px;top:1185.03px;font-size:11.3px;line-height:11.3px;color:#3b3d44;font-weight:normal;">©</div>
<div class="t" style="left:567.50px;top:1185.03px;font-size:11.3px;line-height:11.3px;color:#4f70e0;font-weight:bold;">Wukirsari Online</div>
<div class="t" style="left:1410.00px;top:1186.85px;font-size:7.5px;line-height:7.5px;color:#9a9ca3;font-weight:normal;">Support By</div>
<div class="t" style="left:1449.20px;top:1187.19px;font-size:7.1px;line-height:7.1px;color:#4f70e0;font-weight:bold;">Heloconia</div>
</body></html>
